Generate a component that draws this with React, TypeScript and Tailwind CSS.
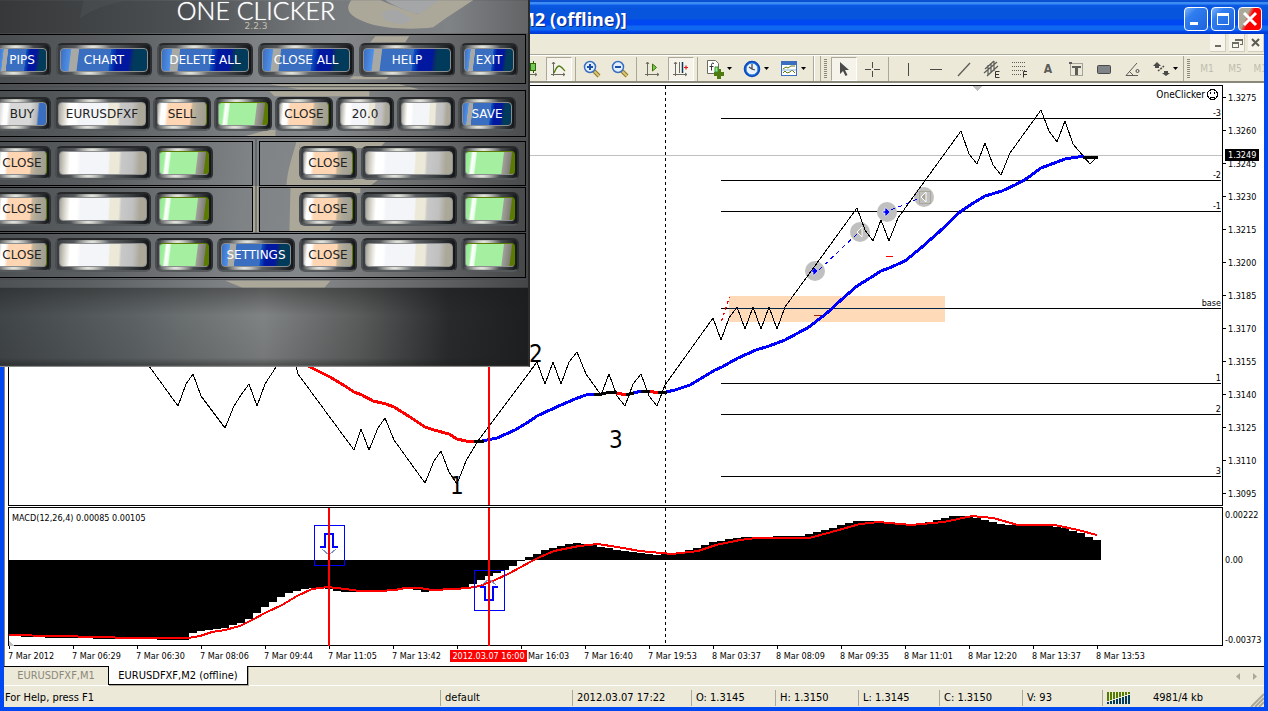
import type { ReactNode } from "react";

type Point = [number, number];

const ui = "font-['DejaVu_Sans_Condensed','DejaVu_Sans',sans-serif]";

const pricePath =
  "149,366 178,406 186,384 193,374 201,396 225,428 234,406 241,395 249,384 257,406 265,384 278,364 288,340 295,362 298,374 354,450 361,429 369,450 378,428 385,418 394,440 425,483 434,461 441,451 449,472 457,484 466,461 478,441 537,362 545,384 553,362 561,384 569,362 577,352 586,374 601,395 609,374 617,396 625,406 633,384 641,374 649,396 657,406 665,385 713,318 721,340 729,318 737,307 745,329 753,307 761,329 769,307 777,329 785,307 857,208 865,230 873,241 881,220 889,241 898,218 961,131 969,154 977,164 985,143 993,165 1001,175 1010,153 1041,110 1049,131 1057,142 1065,121 1073,144 1084,157 1090,164 1096,158";

const averages = [
  { color: "#ff0000", points: "306,365 316,370 330,377 345,386 354,392 362,395 373,401 386,404 394,407 410,417 425,427 434,430 449,434 457,439 466,441 475,442" },
  { color: "#0000ff", points: "482,441 497,438 515,430 530,421 537,416 550,410 561,405 575,399 586,395 596,394" },
  { color: "#ff0000", points: "616,393 627,395" },
  { color: "#0000ff", points: "633,393 642,391 650,392" },
  { color: "#ff0000", points: "648,391 659,393" },
  { color: "#0000ff", points: "666,392 675,390 690,385 700,379 715,370 722,367 738,358 756,350 769,346 785,340 798,333 809,327 827,313 841,300 857,286 870,278 881,271 889,268 905,261 922,247 939,232 961,211 975,202 985,196 1002,191 1015,185 1026,179 1041,168 1057,162 1065,159 1084,156" },
  { color: "#000000", points: "474,442 484,441" },
  { color: "#000000", points: "594,394 602,394 610,392 617,393" },
  { color: "#000000", points: "626,395 634,393" },
  { color: "#000000", points: "641,391 650,391" },
  { color: "#000000", points: "658,393 667,392" },
  { color: "#000000", points: "1083,157 1098,158" },
];

const levels = [
  { y: 118, label: "-3" },
  { y: 180, label: "-2" },
  { y: 211, label: "-1" },
  { y: 308, label: "base" },
  { y: 383, label: "1" },
  { y: 414, label: "2" },
  { y: 476, label: "3" },
];

const macdKeys: Point[] = [
  [9, 636], [60, 638], [120, 639], [187, 640], [190, 634], [205, 630], [225, 628], [240, 623], [250, 618],
  [262, 609], [275, 601], [290, 592], [300, 590], [315, 588], [328, 589], [345, 592], [360, 592], [385, 590],
  [405, 588], [425, 592], [440, 589], [460, 588], [470, 585], [485, 578], [500, 572], [512, 567], [520, 561],
  [530, 557], [545, 550], [575, 543], [590, 544], [600, 547], [625, 551], [660, 555], [680, 552], [700, 547],
  [712, 542], [745, 537], [800, 536], [825, 530], [855, 521], [872, 521], [890, 524], [920, 524], [935, 520],
  [955, 516], [970, 517], [990, 521], [1005, 525], [1050, 526], [1065, 528], [1080, 533], [1090, 537], [1097, 540],
];

const signal =
  "9,635 55,636 100,637 130,638 188,638 200,636 212,632 225,630 240,626 252,620 265,613 282,605 297,596 312,589 328,587 345,589 360,591 380,591 395,590 405,588 420,588 432,590 455,589 468,588 480,586 495,580 510,573 530,562 540,557 554,551 579,546 598,544 617,547 640,551 672,554 698,551 716,545 740,540 756,538 809,538 828,533 860,524 879,522 911,525 944,522 972,516 993,518 1018,525 1055,525 1078,530 1097,535";

function macdAt(x: number): number {
  for (let i = 1; i < macdKeys.length; i++) {
    const [x0, y0] = macdKeys[i - 1];
    const [x1, y1] = macdKeys[i];
    if (x <= x1) return Math.round(y0 + ((y1 - y0) * (x - x0)) / (x1 - x0));
  }
  return 540;
}

const bars = Array.from({ length: 137 }, (_, i) => {
  const x = 9 + i * 8;
  return { x: x - 4, y: macdAt(x) };
});

const prices = ["1.3275", "1.3260", "1.3245", "1.3230", "1.3215", "1.3200", "1.3185", "1.3170", "1.3155", "1.3140", "1.3125", "1.3110", "1.3095"];

const times = ["7 Mar 2012", "7 Mar 06:29", "7 Mar 06:30", "7 Mar 08:06", "7 Mar 09:44", "7 Mar 11:05", "7 Mar 13:42", "", "Mar 16:03", "7 Mar 16:40", "7 Mar 19:53", "8 Mar 03:37", "8 Mar 08:09", "8 Mar 09:35", "8 Mar 11:01", "8 Mar 12:20", "8 Mar 13:37", "8 Mar 13:53"];

/* ---------- main window: title, menu and toolbar ---------- */

function TitleBar() {
  return (
    <header className="flex h-[34px] items-center justify-between overflow-hidden bg-[linear-gradient(to_bottom,#0a50d0_0,#0a50d0_2px,#3c8cf4_2px,#3c8cf4_4px,#0a5ae6_5px,#0855dd_8px,#0855dd_19px,#0048f1_20px,#0048f1_25px,#1068f0_26px,#1068f0_30px,#0048f1_31px,#0038c8_34px)] pl-[518px] pr-1.5">
      <h1 className="whitespace-nowrap pt-1 font-['Noto_Sans',sans-serif] text-lg font-bold leading-6 text-white [text-shadow:1px_1px_0_#0a2a80]">
        M2 (offline)]
      </h1>
      <div className="flex gap-[3px] pt-1">
        <button aria-label="Minimize" className="flex size-6 items-center justify-center rounded border border-white bg-[linear-gradient(135deg,#7fb4f8,#2f7ef0_30%,#1f62dc)]">
          <svg width="16" height="16"><rect x="2" y="11" width="8" height="3" fill="#fff" /></svg>
        </button>
        <button aria-label="Maximize" className="flex size-6 items-center justify-center rounded border border-white bg-[linear-gradient(135deg,#7fb4f8,#2f7ef0_30%,#1f62dc)]">
          <svg width="16" height="16" shapeRendering="crispEdges"><path d="M2 2h12v12H2zM3 5v8h10V5z" fill="#fff" fillRule="evenodd" /></svg>
        </button>
        <button aria-label="Close" className="flex size-6 items-center justify-center rounded border border-white bg-[linear-gradient(115deg,#aca899_0,#aca899_35%,#ff0000_50%)]">
          <svg width="16" height="16"><path d="M2 2l12 12M14 2L2 14" stroke="#fff" strokeWidth="3" /></svg>
        </button>
      </div>
    </header>
  );
}

function MenuBar() {
  const cls = "flex h-[18px] w-4 items-center justify-center border-b border-r border-[#d0cdbd] bg-[#f7f5ec]";
  return (
    <div className="flex h-[21px] items-start justify-end gap-[3px] border-b border-[#aca899]">
      <button aria-label="Minimize chart" className={cls}>
        <svg width="12" height="12"><rect x="3" y="8" width="6" height="2" fill="#6e6e60" /></svg>
      </button>
      <button aria-label="Restore chart" className={cls}>
        <svg width="12" height="12" shapeRendering="crispEdges"><path d="M4 4V2h7v5H9M4 3h7M1.500 5v5h6V5zM1 6h7" fill="none" stroke="#6e6e60" /></svg>
      </button>
      <button aria-label="Close chart" className={cls}>
        <svg width="12" height="12"><path d="M2 2l7 7M9 2L2 9" stroke="#5c5c50" strokeWidth="2" /></svg>
      </button>
    </div>
  );
}

function Tool({ label, pressed, menu, children }: { label: string; pressed?: boolean; menu?: boolean; children: ReactNode }) {
  return (
    <button
      aria-label={label}
      aria-pressed={pressed}
      className={
        menu
          ? "flex h-6 w-[37px] shrink-0 items-center justify-center gap-0.5"
          : pressed
            ? "mx-px flex h-6 w-[26px] shrink-0 items-center justify-center border border-b-white border-l-[#aca899] border-r-white border-t-[#aca899] bg-[#f6f4ea]"
            : "flex h-6 w-7 shrink-0 items-center justify-center"
      }
    >
      <svg width="20" height="20" viewBox="0 0 20 20" fill="none" className="shrink-0">{children}</svg>
      {menu && <svg width="6" height="4" className="shrink-0"><path d="M0 0h5L2.500 3z" fill="#000" /></svg>}
    </button>
  );
}

const Sep = () => <span className="flex w-[5px] shrink-0 justify-center"><i className="block h-6 w-px bg-[#aca899]" /></span>;
const Grip = () => (
  <span className="mx-[3px] h-5 w-[3px] shrink-0 bg-[repeating-linear-gradient(to_bottom,#8c897c_0,#8c897c_1px,transparent_1px,transparent_2px)]" />
);
const BandEnd = () => (
  <span className="flex h-[26px] w-2 shrink-0 justify-between border-l border-r border-[#aca899]"><i className="block w-px bg-white" /></span>
);

const axis = <path d="M4.500 3v14M2 15.500h14M3 5l1.500-2L6 5M14 14l2 1.500-2 1.500" stroke="#6b6b62" />;

function Toolbar() {
  return (
    <nav aria-label="Chart tools" className="flex h-[28px] items-center overflow-hidden border-b-2 border-[#8a8878] border-t border-t-white pl-[513px]">
      <Tool label="Candlesticks">
        {axis}
        <path d="M12.500 2v12" stroke="#2a5c00" />
        <rect x="9.500" y="4.500" width="5" height="7" fill="#72c858" stroke="#2f6a00" />
      </Tool>
      <Tool label="Line chart" pressed>
        {axis}
        <path d="M5 14c2-5 3-7 5-7s4 3 6 5" stroke="#4f7a10" strokeWidth="1.300" />
      </Tool>
      <Sep />
      <Tool label="Zoom in">
        <path d="M12 12l5 5" stroke="#8f7a20" strokeWidth="4" /><path d="M12 12l5 5" stroke="#d8c47a" strokeWidth="2" />
        <circle cx="8" cy="8" r="5.500" fill="#e4f0ff" stroke="#3a6ec0" strokeWidth="1.500" />
        <path d="M5 8h6M8 5v6" stroke="#1a50a8" strokeWidth="2" />
      </Tool>
      <Tool label="Zoom out">
        <path d="M12 12l5 5" stroke="#8f7a20" strokeWidth="4" /><path d="M12 12l5 5" stroke="#d8c47a" strokeWidth="2" />
        <circle cx="8" cy="8" r="5.500" fill="#e4f0ff" stroke="#3a6ec0" strokeWidth="1.500" />
        <path d="M5 8h6" stroke="#1a50a8" strokeWidth="2" />
      </Tool>
      <Sep />
      <Tool label="Auto scroll">
        {axis}
        <path d="M9.500 5v7l4-3.500z" fill="#72c858" stroke="#3f7000" />
      </Tool>
      <Tool label="Chart shift" pressed>
        {axis}
        <path d="M8.500 3v11" stroke="#6b6b62" />
        <path d="M11.500 3v11" stroke="#003b5c" strokeWidth="1.500" />
        <path d="M13 8.500h4M15 6.500v4" stroke="#e01818" strokeWidth="1.200" />
      </Tool>
      <Sep />
      <Tool label="Indicators" menu>
        <path d="M2.500 1.500h8l3 3v10h-11z" fill="#fff" stroke="#6b6b62" />
        <path d="M9 4.500c-2-1-2.500 0-2.500 2v5M4.500 7.500h4" stroke="#333" />
        <path d="M12 10h4v3h3v4h-3v3h-4v-3H9v-4h3z" fill="#4f7a10" /><path d="M10 8h3v5h-3z" fill="#8ff088" stroke="#3f8a30" />
      </Tool>
      <Tool label="Periods" menu>
        <circle cx="10" cy="10" r="7" fill="#eaf2fb" stroke="#0a4cba" strokeWidth="2.600" />
        <circle cx="10" cy="10" r="6" stroke="#3c8cf4" />
        <path d="M10 5v5l3 1M7 8l3 2" stroke="#4a4a4a" strokeWidth="1.300" />
      </Tool>
      <Tool label="Templates" menu>
        <rect x="2.500" y="2.500" width="15" height="14" fill="#fff" stroke="#3a6ec0" />
        <path d="M2 4.500h16" stroke="#3a6ec0" strokeWidth="3" />
        <path d="M4 10l3-2 2 1 3-2h4M4 14l2-2 2 2 3-1 2-2 3 3" stroke="#5f7a10" />
        <path d="M3 11h14" stroke="#8ab0e0" />
      </Tool>
      <span className="w-0.5 shrink-0" />
      <BandEnd />
      <Grip />
      <Tool label="Cursor" pressed>
        <path d="M6 3v12l3-3 2.500 5 2-1-2.500-5h4z" fill="#4a4a48" />
      </Tool>
      <Tool label="Crosshair"><path d="M10.500 3v6M10.500 12v6M3 10.500h6M12 10.500h6" stroke="#4a4a48" /></Tool>
      <Sep />
      <span className="w-[3px] shrink-0" />
      <Tool label="Vertical line"><path d="M10.500 4v13" stroke="#4a4a48" /></Tool>
      <Tool label="Horizontal line"><path d="M4 10.500h12" stroke="#4a4a48" /></Tool>
      <Tool label="Trendline"><path d="M4 17L16 4" stroke="#5c5c58" strokeWidth="1.300" /></Tool>
      <Tool label="Equidistant channel">
        <path d="M2 14L15 3M3 10l9-8M5 17L16 7M6 6v10M9 4v10M12 2v10" stroke="#5c5c58" strokeWidth="1.200" />
        <path d="M17.500 12.500h-4v6h4M13 15.500h4" stroke="#333" />
      </Tool>
      <Tool label="Fibonacci retracement">
        <path d="M2 3.500h14M2 7.500h14M2 11.500h14M2 15.500h9" stroke="#5c5c58" strokeDasharray="1 1" />
        <path d="M17 12.500h-3.500v6M14 15.500h3" stroke="#333" />
      </Tool>
      <button aria-label="Text" className="flex h-6 w-7 shrink-0 items-center justify-center font-['DejaVu_Sans_Condensed',sans-serif] text-xs font-bold text-[#5c5c58]">A</button>
      <Tool label="Text label">
        <rect x="4.500" y="4.500" width="12" height="12" stroke="#5c5c58" strokeDasharray="1 1" />
        <path d="M6 7h9v2h-3v7H9V9H6z" fill="#5c5c58" /><path d="M3 3h3v2H3z" fill="#5c5c58" />
      </Tool>
      <Tool label="Rectangle"><rect x="3.500" y="6.500" width="13" height="8" rx="1" fill="#808388" stroke="#4a4a48" /></Tool>
      <Tool label="Angle"><path d="M15 4L4 16.500h12M7 12l4 4" stroke="#5c5c58" /><circle cx="15.500" cy="12" r="1.500" stroke="#4a4a48" /></Tool>
      <Tool label="Arrows" menu>
        <path d="M6 3l4 4H8v2H4V7H2zM15 17l-4-3h2v-2h4v2h2z" fill="#4a4a48" /><path d="M7 12l6-5" stroke="#4a4a48" strokeWidth="1.500" strokeDasharray="2 1" />
      </Tool>
      <span className="h-[26px] w-px shrink-0 bg-[#aca899]" />
      <Grip />
      <div className="flex shrink-0 font-['DejaVu_Sans_Condensed',sans-serif] text-[10px] text-[#c0bdb0]">
        <button className="w-7">M1</button>
        <button className="w-7">M5</button>
        <button className="w-7">M15</button>
      </div>
    </nav>
  );
}

/* ---------- charts ---------- */

function EntryMarker({ x, y, exit }: { x: number; y: number; exit?: boolean }) {
  return (
    <g>
      <circle cx={x} cy={y} r="10" fill="#c0c0c0" />
      {exit ? (
        <path d={`M${x + 2} ${y - 5}v10l-5-5z`} fill="#aca899" stroke="#fff" />
      ) : (
        <path d={`M${x - 4} ${y - 1}h2v-3h1l4 4-4 4h-1v-3h-2z`} fill="#0000ff" stroke="#fff" strokeWidth="0.600" />
      )}
    </g>
  );
}

function PriceChart() {
  return (
    <svg viewBox="8 85 1215 421" preserveAspectRatio="xMinYMin meet" className="block w-full" role="img" aria-label="EURUSDFXF price">
      <rect x="8.500" y="85.500" width="1214" height="420" fill="#fff" stroke="#000" shapeRendering="crispEdges" />
      <g shapeRendering="crispEdges" fill="none">
        <path d="M9 155.500H1222" stroke="#c0c0c0" />
        <rect x="729" y="296" width="216" height="26" fill="#ffdab9" />
        {levels.map((l) => <path key={l.y} d={`M721 ${l.y}.500H1221`} stroke="#000" />)}
        <path d="M729 308.500h216" stroke="#00264a" />
        <path d="M665.500 86v419" stroke="#000" strokeDasharray="3 3" />
        <path d="M721.500 321l8-24" stroke="#f00" strokeDasharray="3 3" />
        <path d="M814 315.500h7" stroke="#a02000" />
        <path d="M886 256.500h7" stroke="#f00" />
        <path d="M973 86h9l-4.500 5z" fill="#c0c0c0" />
      </g>
      <EntryMarker x={815} y={271} />
      <EntryMarker x={860} y={232} exit />
      <EntryMarker x={887} y={212} />
      <EntryMarker x={924} y={197} exit />
      <rect x="919.500" y="191.500" width="11" height="12" fill="none" stroke="#aca899" />
      <g shapeRendering="crispEdges" fill="none">
        <path d="M819 270L858 233M891 210L920 198" stroke="#0000ff" strokeDasharray="4 4" />
        <polyline points={pricePath} stroke="#000" />
        {averages.map((a) => <polyline key={a.points} points={a.points} stroke={a.color} strokeWidth="3" strokeLinejoin="round" />)}
        <path d="M489 86V505" stroke="#f00" strokeWidth="2" />
        <circle cx="1212.500" cy="94.500" r="5" stroke="#000" />
        <path d="M1210.500 92v2M1214.500 92v2M1210 97h5" stroke="#000" />
      </g>
      <g className="font-['DejaVu_Sans_Condensed',sans-serif] text-[9px]" textAnchor="end">
        <text x="1205" y="98" className="text-[10px]">OneClicker</text>
        {levels.map((l) => <text key={l.label} x="1221" y={l.y - 2}>{l.label}</text>)}
      </g>
      <g className="font-['DejaVu_Sans_Condensed',sans-serif] text-2xl">
        <text x="450" y="494">1</text>
        <text x="529" y="362">2</text>
        <text x="609" y="448">3</text>
      </g>
    </svg>
  );
}

function MacdChart() {
  return (
    <svg viewBox="8 507 1215 143" preserveAspectRatio="xMinYMin meet" className="block w-full" role="img" aria-label="MACD">
      <g shapeRendering="crispEdges" fill="none">
        <rect x="8.500" y="507.500" width="1214" height="138" fill="#fff" stroke="#000" />
        <path d="M665.500 508v138" stroke="#000" strokeDasharray="3 3" />
        {bars.map((b) => (
          <rect key={b.x} x={Math.max(b.x, 9)} y={Math.min(b.y, 560)} width={b.x < 9 ? 4 : 8} height={Math.abs(b.y - 560)} fill="#000" />
        ))}
        {times.map((_, i) => <path key={i} d={`M${9 + i * 64}.500 646v3`} stroke="#000" />)}
        <path d="M9 640v6h5z" fill="#c0c0c0" />
        <polyline points={signal} stroke="#f00" strokeWidth="2" />
        <rect x="314.500" y="525.500" width="30" height="40" stroke="#0000ff" />
        <path d="M320 547h5v-13h8v13h5" stroke="#0000ff" strokeWidth="2" />
        <path d="M322 549l7 6 7-6" stroke="#8090c0" />
        <rect x="474.500" y="570.500" width="30" height="40" stroke="#0000ff" />
        <path d="M480 587h5v13h8v-13h5" stroke="#0000ff" strokeWidth="2" />
        <path d="M482 585l7-6 7 6" stroke="#8090c0" />
        <path d="M329 508v138M489 508v138" stroke="#f00" strokeWidth="2" />
      </g>
      <text x="12" y="521" className="font-['DejaVu_Sans_Condensed',sans-serif] text-[9px]">MACD(12,26,4) 0.00085 0.00105</text>
    </svg>
  );
}

function Charts() {
  return (
    <main className={`${ui} flex-1 overflow-hidden border-l border-[#8a8878] bg-white pl-[3px] pt-0.5 text-[9px] leading-3 text-black`}>
      <div className="flex items-start">
        <div className="min-w-0 flex-1"><PriceChart /></div>
        <div className="relative w-[41px] shrink-0">
          <ul className="-mb-4 flex flex-col pt-[7px]">
            {prices.map((p) => (
              <li key={p} className="flex h-[33px] items-start">
                <i className="mt-[5px] block h-px w-[3px] bg-black" />
                <span className="pl-0.5">{p}</span>
              </li>
            ))}
          </ul>
          <span className="absolute left-0.5 top-16 bg-black px-[3px] text-white">1.3249</span>
        </div>
      </div>
      <div className="mt-px flex">
        <div className="min-w-0 flex-1"><MacdChart /></div>
        <div className="flex w-[41px] shrink-0 flex-col whitespace-nowrap pl-0.5 pt-0.5">
          <span>0.00222</span>
          <span className="mt-[33px]">0.00</span>
          <span className="mt-[68px]">-0.00373</span>
        </div>
      </div>
      <div className="relative flex h-4 overflow-hidden whitespace-nowrap">
        {times.map((t, i) => (
          <span key={i} className={i === 8 ? "w-16 shrink-0 pl-2" : "w-16 shrink-0"}>{t}</span>
        ))}
        <span className="absolute left-[442px] top-0 w-[77px] bg-[#ff0000] text-center text-white">2012.03.07 16:00</span>
      </div>
    </main>
  );
}

function Tabs() {
  return (
    <div className={`${ui} flex h-5 items-start justify-between border-t border-black border-b border-b-white text-[11px] leading-4`}>
      <div className="flex">
        <button className="w-[104px] text-[#8a8878]">EURUSDFXF,M1</button>
        <button className="-mt-px h-[19px] w-[140px] border border-t-0 border-black bg-white pt-px text-black shadow-[1px_1px_0_#aca899]">EURUSDFXF,M2 (offline)</button>
      </div>
      <div className="flex gap-2.5 pr-1.5 pt-1.5">
        <button aria-label="Previous tab"><svg width="6" height="7" className="block"><path d="M4 0v7L0 3.500z" fill="#aca899" /></svg></button>
        <button aria-label="Next tab"><svg width="6" height="7" className="block"><path d="M1 0v7l4-3.500z" fill="#aca899" /></svg></button>
      </div>
    </div>
  );
}

function StatusBar() {
  const cell = "shrink-0 border-l border-[#aca899] pl-1";
  return (
    <footer className={`${ui} flex h-[21px] items-center whitespace-nowrap pt-[3px] text-[11px] leading-4 text-black`}>
      <span className="w-[436px] shrink-0 pl-px">For Help, press F1</span>
      <span className={`${cell} w-[132px]`}>default</span>
      <span className={`${cell} w-[119px]`}>2012.03.07 17:22</span>
      <span className={`${cell} w-[84px]`}>O: 1.3145</span>
      <span className={`${cell} w-[83px]`}>H: 1.3150</span>
      <span className={`${cell} w-[81px]`}>L: 1.3145</span>
      <span className={`${cell} w-[83px]`}>C: 1.3150</span>
      <span className={`${cell} w-[80px]`}>V: 93</span>
      <span className={`${cell} flex flex-1 items-center gap-[22px]`}>
        <svg width="24" height="12" shapeRendering="crispEdges" aria-hidden="true">
          {Array.from({ length: 8 }, (_, i) => (
            <g key={i}>
              <rect x={i * 3} y="0" width="2" height={9 - i} fill="#557a00" />
              <rect x={i * 3} y={10 - i} width="2" height={2 + i} fill="#003b5c" />
            </g>
          ))}
        </svg>
        <span>4981/4 kb</span>
      </span>
      <svg width="14" height="14" className="self-end" aria-hidden="true"><path d="M1 14L14 1M5 14l9-9M9 14l5-5" stroke="#aca899" strokeWidth="2" /></svg>
    </footer>
  );
}

/* ---------- One Clicker panel ---------- */

const faces = {
  blue: "border-[#8c8e90] text-white bg-[linear-gradient(97deg,#3a6ec0_0,#4f90e8_11%,#a8a8a4_12%,#a8a8a4_20%,#3a6ec0_21%,#3a6ec0_56%,#0c50c0_57%,#0018a0_64%,#0018a0_78%,#0a2478_80%,#003b5c_84%)]",
  white: "border-[#8c8e90] text-[#222] bg-[linear-gradient(93deg,#a8a69c_0,#d8d6cc_6%,#ffffff_12%,#ffffff_20%,#f4f5f8_24%,#f4f5f8_56%,#ece9d8_58%,#ece9d8_68%,#c8c8c8_71%,#c0c0c0_84%,#aca899_92%)]",
  buy: "border-[#8c8e90] text-[#222] bg-[linear-gradient(95deg,#c8c8c8_0,#fff_14%,#fff_20%,#d8d8d8_26%,#d8d8d8_66%,#b4b4b4_80%,#3a6ec0_84%)]",
  peach: "border-[#8c8e90] border-r-[#5a7a00] text-[#222] bg-[linear-gradient(95deg,#a8a69c_0,#ffffff_8%,#ffffff_16%,#ffd6b4_22%,#ffd6b4_66%,#c8b498_70%,#aca899_80%,#a09c8c)]",
  green: "border-[#8c8e90] border-t-[#5a7a00] border-r-[#5a7a00] text-[#222] bg-[linear-gradient(97deg,#8ee890_0,#a4f0a0_10%,#ffffff_14%,#e8ffe8_20%,#a4f0a0_23%,#a4f0a0_74%,#a0a098_76%,#808078_90%,#5a7a00_92%)]",
};

const frame =
  "flex h-[34px] shrink-0 items-center justify-center rounded-md border-2 border-b-[#55595c] border-l-[#4a4e51] border-r-[#2c2f31] border-t-[#26282a] bg-[radial-gradient(ellipse_18px_4px_at_38%_2px,#f0f0e8,transparent),radial-gradient(ellipse_18px_4px_at_34%_28px,#f0f0e8,transparent),linear-gradient(to_right,#3a3d40,#75797b_40%,#3a3d40_80%,#141618)]";

function Key({ kind, size = "md", label, children }: { kind: keyof typeof faces; size?: "sm" | "md" | "lg"; label?: string; children?: ReactNode }) {
  const width = size === "lg" ? "w-24" : size === "md" ? "w-[58px]" : "w-[78px]";
  return (
    <button aria-label={label} className={`${frame} ${width}`}>
      <span className={`${faces[kind]} mx-0.5 flex h-6 flex-1 items-center justify-center whitespace-nowrap rounded border text-xs`}>
        {children}
      </span>
    </button>
  );
}

const rowBox = "flex items-center overflow-hidden border border-black";

function OneClicker() {
  return (
    <section
      aria-label="One Clicker"
      className="absolute left-0 top-0 h-[367px] w-[530px] overflow-hidden border-b border-r-2 border-b-[#8a8a88] border-r-[#2a2b2c] bg-[linear-gradient(97deg,#484c4e_0,#5c6063_22%,#808386_47%,#85888a_60%,#6c6e6f_76%,#404244_100%)] font-['DejaVu_Sans',sans-serif]"
    >
      <svg viewBox="0 0 529 366" className="absolute inset-0 size-full" aria-hidden="true">
        <defs>
          <linearGradient id="top" x1="0" x2="1" y1="0" y2="0">
            <stop offset="0" stopColor="#363839" />
            <stop offset="0.350" stopColor="#4c5052" />
            <stop offset="0.600" stopColor="#75797c" />
            <stop offset="0.850" stopColor="#808386" />
            <stop offset="1" stopColor="#626466" />
          </linearGradient>
          <linearGradient id="base" x1="0" x2="1" y1="0" y2="0">
            <stop offset="0" stopColor="#404547" />
            <stop offset="0.250" stopColor="#5c6264" />
            <stop offset="0.500" stopColor="#808383" />
            <stop offset="0.680" stopColor="#5a5c5c" />
            <stop offset="0.850" stopColor="#282a2b" />
            <stop offset="1" stopColor="#1c1e1f" />
          </linearGradient>
          <linearGradient id="shade" x1="0" x2="0" y1="0" y2="1">
            <stop offset="0" stopColor="#1c1c1c" stopOpacity="0.400" />
            <stop offset="0.350" stopColor="#1c1c1c" stopOpacity="0" />
            <stop offset="0.900" stopColor="#1c1c1c" stopOpacity="0.100" />
            <stop offset="1" stopColor="#1c1c1c" stopOpacity="0.500" />
          </linearGradient>
        </defs>
        <rect width="529" height="33" fill="url(#top)" />
        <path d="M80 18C95 8 110 3 130 0H84z" fill="#4c5052" opacity="0.600" />
        <path d="M352 0C344 10 352 18 372 24c14 4 40 6 62 3l14-10 26-17h-35l-20 14c-16-5-28-10-38-14z" fill="#aca899" />
        <path d="M386 0c8 5 20 11 34 14L440 0zM382 12l14-3 18 10-12 5-16-4z" fill="#a4a6a8" />
        <path d="M376 36h34l-4 6h-35zM354 76h36l-3 3h-37z" fill="#aca899" />
        <path d="M270 84h130l20 5H300zM270 91h100v5h-95zM268 130h8v6h-30z" fill="#aca899" />
        <path d="M300 142h-3c-4 14-9 28-10 43h85l8-6h-76zM300 142h86l-6 6h-80zM291 188h70v5h-60v32h34l-5 6h-40z" fill="#aca899" />
        <rect x="253" y="186" width="6" height="46" fill="#aca899" />
        <path d="M226 281h105l-6 7h-82z" fill="#aca899" />
        <path d="M0 86.500h527M0 138.500h527M0 279.500h527M256.500 139v94" stroke="#4a4d50" />
        <rect y="288" width="529" height="78" fill="url(#base)" />
        <rect y="288" width="529" height="78" fill="url(#shade)" />
      </svg>
      <div className="relative">
        <header className="flex h-[34px] flex-col items-center overflow-hidden pr-4">
          <h2 className="font-['Lato',sans-serif] text-[25px] font-light leading-5 text-white [text-shadow:0_0_1px_#fff]">ONE CLICKER</h2>
          <p className="text-[9px] leading-3 text-[#c4c0b0]">2.2.3</p>
        </header>
        <div className="-ml-2 mr-0.5 flex flex-col">
          <div className={`${rowBox} h-[50px] gap-[5px] pt-px`}>
            <Key kind="blue">PIPS</Key>
            <Key kind="blue" size="lg">CHART</Key>
            <Key kind="blue" size="lg">DELETE ALL</Key>
            <Key kind="blue" size="lg">CLOSE ALL</Key>
            <Key kind="blue" size="lg">HELP</Key>
            <Key kind="blue">EXIT</Key>
          </div>
          <div className={`${rowBox} mt-1.5 h-[47px] gap-[3px]`}>
            <Key kind="buy">BUY</Key>
            <Key kind="white" size="lg">EURUSDFXF</Key>
            <Key kind="peach">SELL</Key>
            <Key kind="green" label="Status" />
            <Key kind="peach">CLOSE</Key>
            <span className={`${frame} w-[58px]`}>
              <input aria-label="Pips" defaultValue="20.0" className={`${faces.white} mx-0.5 h-6 w-0 min-w-0 flex-1 rounded border text-center text-xs outline-none`} />
            </span>
            <Key kind="white" label="Value" />
            <Key kind="blue">SAVE</Key>
          </div>
          {[0, 1].map((row) => (
            <div key={row} className={row === 0 ? "mt-1 flex gap-1.5" : "mt-px flex gap-1.5"}>
              <div className={`${rowBox} h-[45px] w-[261px] gap-1 pb-0.5`}>
                <Key kind="peach">CLOSE</Key>
                <Key kind="white" size="lg" label="Left value" />
                <Key kind="green" label="Left status" />
              </div>
              <div className={`${rowBox} h-[45px] flex-1 justify-end gap-1 pb-0.5 pr-1.5`}>
                <Key kind="peach">CLOSE</Key>
                <Key kind="white" size="lg" label="Right value" />
                <Key kind="green" label="Right status" />
              </div>
            </div>
          ))}
          <div className={`${rowBox} mt-px h-[45px] gap-1 pb-0.5`}>
            <Key kind="peach">CLOSE</Key>
            <Key kind="white" size="lg" label="Left value" />
            <Key kind="green" label="Left status" />
            <Key kind="blue" size="sm">SETTINGS</Key>
            <Key kind="peach">CLOSE</Key>
            <Key kind="white" size="lg" label="Right value" />
            <Key kind="green" label="Right status" />
          </div>
        </div>
      </div>
    </section>
  );
}

export default function App() {
  return (
    <div className="relative flex min-h-screen flex-col overflow-hidden bg-[#0048f1]">
      <TitleBar />
      <div className="mx-1 mb-1 flex flex-1 flex-col bg-[#ece9d8]">
        <MenuBar />
        <Toolbar />
        <Charts />
        <Tabs />
        <StatusBar />
      </div>
      <OneClicker />
    </div>
  );
}
